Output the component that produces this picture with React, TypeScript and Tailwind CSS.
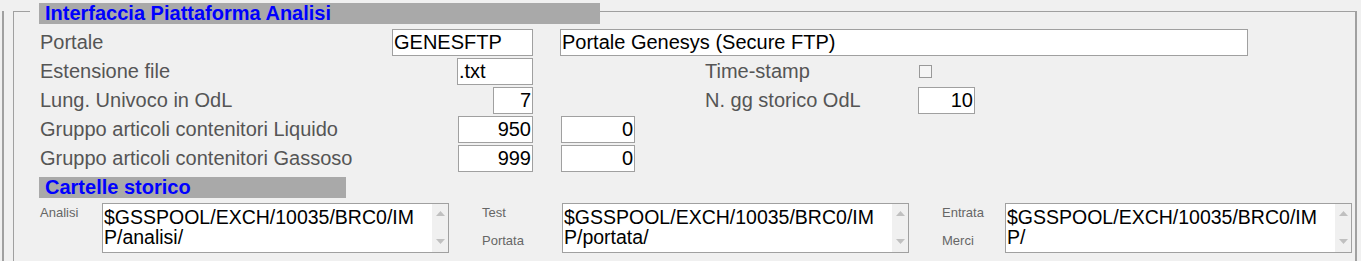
import type { ReactNode } from 'react'

const font = { fontFamily: '"Liberation Sans", Arial, sans-serif' }

const Field = ({ value, width, right }: { value: string; width: string; right?: boolean }) => (
    <div className={`${width} h-[27px] bg-white border border-[#a0a0a0] flex items-center text-[20px] leading-[23px] text-black px-[1px] ${right ? 'justify-end' : ''}`}>
        {value}
    </div>
)

const Row = ({ children }: { children: ReactNode }) => (
    <div className="h-[29px] flex items-center">
        {children}
    </div>
)

const Left = ({ label, children }: { label: string; children: ReactNode }) => (
    <div className="w-[493px] ml-[1px] flex items-center justify-between">
        <span className="text-[20px] leading-[23px] text-[#555555]">{label}</span>
        {children}
    </div>
)

const Header = ({ title, width }: { title: string; width: string }) => (
    <div className={`${width} h-[21px] bg-[#a9a9a9] flex items-center pl-[6px]`}>
        <span className="text-[20px] leading-[21px] font-bold text-[#0000ff]">{title}</span>
    </div>
)

const Scrollbar = () => (
    <div className="w-[16px] bg-[#f0f0f0] flex flex-col items-center justify-between pt-[7px] pb-[8px]">
        <svg width="9" height="5" viewBox="0 0 9 5"><path d="M4.5 0 L9 5 L0 5 Z" fill="#c0c0c0" /></svg>
        <svg width="9" height="5" viewBox="0 0 9 5"><path d="M0 0 L9 0 L4.5 5 Z" fill="#c0c0c0" /></svg>
    </div>
)

// the path wraps at a fixed column like the original control
const Path = ({ text }: { text: string }) => (
    <div className="w-[347px] h-[50px] bg-white border border-[#a0a0a0] flex">
        <div className="flex-1 pl-[1px] pt-[3px] text-[19.5px] leading-[20px] text-black overflow-hidden whitespace-nowrap">
            <div>{text.slice(0, 27)}</div>
            <div>{text.slice(27)}</div>
        </div>
        <Scrollbar />
    </div>
)

const SmallLabels = ({ labels, width }: { labels: string[]; width: string }) => (
    <div className={`${width} flex flex-col gap-[12px] pt-[2px]`}>
        {labels.map(l => (
            <span key={l} className="text-[13px] leading-[16px] text-[#666666]">{l}</span>
        ))}
    </div>
)

export default function App() {
    return (
        <main style={font} className="w-[1361px] h-[261px] overflow-hidden bg-[#f0f0f0] pl-[2px]">
            <div className="h-full border-l-2 border-[#a0a0a0]">
                <div className="ml-[9px] mt-[11px] w-[1344px] h-[300px] border-t border-l border-r-2 border-[#a0a0a0] pl-[25px]">
                    <div className="-mt-[9px] -ml-[9px] pl-[9px] w-fit bg-[#f0f0f0]">
                        <Header title="Interfaccia Piattaforma Analisi" width="w-[561px]" />
                    </div>

                    <div className="mt-[4px]">
                        <Row>
                            <Left label="Portale"><Field value="GENESFTP" width="w-[141px]" /></Left>
                            <div className="ml-[27px]"><Field value="Portale Genesys (Secure FTP)" width="w-[688px]" /></div>
                        </Row>
                        <Row>
                            <Left label="Estensione file"><Field value=".txt" width="w-[76px]" /></Left>
                            <span className="ml-[172px] w-[214px] text-[20px] leading-[23px] text-[#555555]">Time-stamp</span>
                            <div className="w-[13px] h-[13px] border border-[#999999] bg-[#f5f5f5]" />
                        </Row>
                        <Row>
                            <Left label="Lung. Univoco in OdL"><Field value="7" width="w-[40px]" right /></Left>
                            <span className="ml-[172px] w-[213px] text-[20px] leading-[23px] text-[#555555]">N. gg storico OdL</span>
                            <Field value="10" width="w-[57px]" right />
                        </Row>
                        <Row>
                            <Left label="Gruppo articoli contenitori Liquido"><Field value="950" width="w-[75px]" right /></Left>
                            <div className="ml-[28px]"><Field value="0" width="w-[74px]" right /></div>
                        </Row>
                        <Row>
                            <Left label="Gruppo articoli contenitori Gassoso"><Field value="999" width="w-[75px]" right /></Left>
                            <div className="ml-[28px]"><Field value="0" width="w-[74px]" right /></div>
                        </Row>
                    </div>

                    <div className="mt-[4px]">
                        <Header title="Cartelle storico" width="w-[307px]" />
                    </div>

                    <div className="mt-[5px] flex ml-[1px]">
                        <SmallLabels labels={['Analisi']} width="w-[62px]" />
                        <Path text="$GSSPOOL/EXCH/10035/BRC0/IMP/analisi/" />
                        <div className="ml-[33px]"><SmallLabels labels={['Test', 'Portata']} width="w-[80px]" /></div>
                        <Path text="$GSSPOOL/EXCH/10035/BRC0/IMP/portata/" />
                        <div className="ml-[33px]"><SmallLabels labels={['Entrata', 'Merci']} width="w-[63px]" /></div>
                        <Path text="$GSSPOOL/EXCH/10035/BRC0/IMP/" />
                    </div>
                </div>
            </div>
        </main>
    )
}
